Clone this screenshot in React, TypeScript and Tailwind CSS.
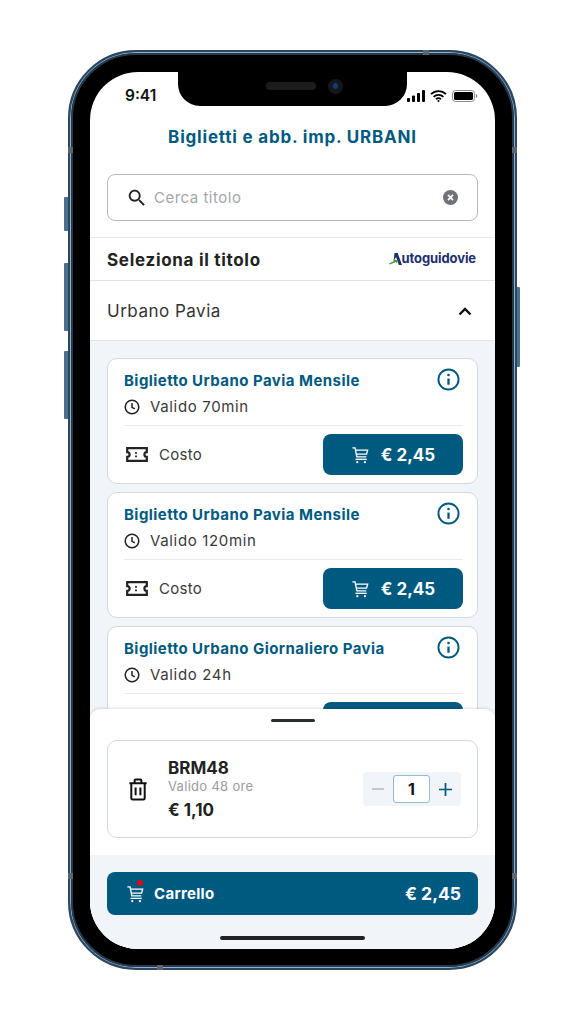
import React from "react";

const tickets = [
  { name: "Biglietto Urbano Pavia Mensile", validity: "Valido 70min" },
  { name: "Biglietto Urbano Pavia Mensile", validity: "Valido 120min" },
  { name: "Biglietto Urbano Giornaliero Pavia", validity: "Valido 24h" },
];

function CartIcon({ className }: { className?: string }) {
  return (
    <svg viewBox="0 0 20 20" fill="none" stroke="currentColor" strokeWidth="1.5" className={className}>
      <path d="M1.5 2h3l2 10h10.500" />
      <path d="M5 4.500h13.500l-1.200 4.500H5.800" />
      <path d="M5 14.800h12.500" />
      <circle cx="7" cy="18" r="1.200" fill="currentColor" stroke="none" />
      <circle cx="15.500" cy="18" r="1.200" fill="currentColor" stroke="none" />
    </svg>
  );
}

function TicketIcon() {
  return (
    <svg viewBox="0 0 22 15" className="h-[15px] w-[22px] text-[#222]" fill="none" stroke="currentColor" strokeWidth="2.2">
      <path d="M1.200 1.200h19.600v3.900a2.400 2.400 0 0 0 0 4.800v3.900H1.200V9.900a2.400 2.400 0 0 0 0-4.800z" />
      <path d="M10 5v1.800M10 8.400v1.800" strokeWidth="1.800" />
    </svg>
  );
}

function ClockIcon() {
  return (
    <svg viewBox="0 0 16 16" className="mb-[1px] h-[16px] w-[16px] text-[#222]" fill="none" stroke="currentColor" strokeWidth="1.500">
      <circle cx="8" cy="8" r="6.800" />
      <path d="M8 4v4.300l2.800 1.600" />
    </svg>
  );
}

function InfoIcon() {
  return (
    <svg viewBox="0 0 24 24" className="h-[23px] w-[23px] text-[#005a80]" fill="none" stroke="currentColor" strokeWidth="2">
      <circle cx="12" cy="12" r="10.500" />
      <path d="M12 11v6.500" strokeWidth="2.400" />
      <circle cx="12" cy="7.300" r="1.400" fill="currentColor" stroke="none" />
    </svg>
  );
}

function StatusIcons() {
  return (
    <div className="flex items-center gap-[5px] text-black">
      <svg viewBox="0 0 18 12" className="h-[12px] w-[18px]" fill="currentColor">
        <rect x="0" y="8" width="3" height="4" rx="1" />
        <rect x="5" y="5.500" width="3" height="6.500" rx="1" />
        <rect x="10" y="3" width="3" height="9" rx="1" />
        <rect x="15" y="0" width="3" height="12" rx="1" />
      </svg>
      <svg viewBox="0 0 17 12" className="h-[12px] w-[17px]" fill="none" stroke="currentColor" strokeWidth="1.900">
        <path d="M1 4.200a10.600 10.600 0 0 1 15 0" />
        <path d="M3.600 6.900a7 7 0 0 1 9.800 0" />
        <path d="M6.100 9.300a3.400 3.400 0 0 1 4.800 0" />
        <circle cx="8.500" cy="11" r="1" fill="currentColor" stroke="none" />
      </svg>
      <svg viewBox="0 0 26 12" className="h-[12px] w-[26px]" fill="none">
        <rect x="0.500" y="0.500" width="22" height="11" rx="3" stroke="#888" />
        <rect x="2" y="2" width="19" height="8" rx="1.600" fill="currentColor" />
        <path d="M24 4v4c.8-.3 1.400-1.100 1.400-2s-.6-1.700-1.400-2z" fill="#888" />
      </svg>
    </div>
  );
}

function Logo() {
  return (
    <div className="flex items-center text-[13px] font-bold tracking-[-0.1px] text-[#1c2f6e]">
      <svg viewBox="0 0 14 12" className="-mr-[1px] h-[12px] w-[14px]">
        <path d="M5.500 0h3.200L13 12H9.800L7 4 4.600 8z" fill="#1c2f6e" />
        <path d="M0 10.500 5 8l-.8-1.300L9 7l-1.500 3.500-.8-1.400L1 11.500z" fill="#4f9a2f" />
      </svg>
      <span>utoguidovie</span>
    </div>
  );
}

function TicketCard({ name, validity }: { name: string; validity: string }) {
  return (
    <div className="h-[126px] shrink-0 rounded-[10px] border border-[#d3d9e0] bg-white pl-[16px] pr-[14px]">
      <div className="flex h-[35px] items-end justify-between pr-[3px]">
        <span className="text-[15px] font-bold leading-[26px] tracking-[0.45px] text-[#005a80]">{name}</span>
        <span className="mb-[3px]">
          <InfoIcon />
        </span>
      </div>
      <div className="mt-[1px] flex h-[24px] items-center gap-[10px] text-[#3a3a3a]">
        <ClockIcon />
        <span className="pt-[1px] text-[15px] tracking-[0.65px]">{validity}</span>
      </div>
      <div className="mt-[6px] border-t border-[#e6e9ed] pt-[8px]">
        <div className="flex items-center justify-between pl-[2px]">
          <div className="flex items-center gap-[11px] text-[15px] tracking-[0.3px] text-[#3a3a3a]">
            <TicketIcon />
            <span className="pt-[2px]">Costo</span>
          </div>
          <button className="flex h-[41px] w-[140px] items-center justify-center gap-[12px] rounded-[8px] bg-[#005a80] text-[17px] font-bold text-white">
            <CartIcon className="h-[18px] w-[18px]" />
            <span className="pt-[2px]">€ 2,45</span>
          </button>
        </div>
      </div>
    </div>
  );
}

export default function App() {
  return (
    <div className="min-h-[1024px] bg-white pl-[68px] pt-[50px] font-['Inter',sans-serif]">
      <div className="relative h-[920px] w-[449px]">
        {/* side buttons */}
        <div className="absolute -left-[4px] top-[147px] h-[34px] w-[4px] rounded-l-[1px] bg-[#4d708c]" />
        <div className="absolute -left-[4px] top-[213px] h-[68px] w-[4px] rounded-l-[1px] bg-[#4d708c]" />
        <div className="absolute -left-[4px] top-[301px] h-[68px] w-[4px] rounded-l-[1px] bg-[#4d708c]" />
        <div className="absolute -right-[3px] top-[237px] h-[80px] w-[3px] rounded-r-[1px] bg-[#4d708c]" />

        {/* frame */}
        <div className="h-full rounded-[68px] border-[2px] border-[#2b4860] bg-[#2b4860]">
          <div className="h-full rounded-[66px] border border-[#8fb2cf]">
            <div className="h-full rounded-[65px] border-[2px] border-[#25394a] bg-black p-[17px] pb-[16px]">
              <div className="relative flex h-full flex-col overflow-hidden rounded-[48px] bg-white">
                {/* notch */}
                <div className="absolute left-[88px] top-0 flex h-[34px] w-[229px] items-center justify-center gap-[12px] rounded-b-[22px] bg-black pb-[6px] pl-[24px]">
                  <div className="h-[8px] w-[50px] rounded-full bg-[#1c1c1e]" />
                  <div className="flex h-[15px] w-[15px] items-center justify-center rounded-full bg-[#14161c]">
                    <div className="h-[6px] w-[5px] rounded-full bg-[#123a73]" />
                  </div>
                </div>

                {/* header */}
                <div className="h-[166px] shrink-0 border-b border-[#e6e8eb] px-[17px]">
                  <div className="flex h-[49px] items-start justify-between pl-[18px] pt-[15px]">
                    <span className="text-[15.500px] font-semibold leading-[18px] text-[#111]">9:41</span>
                    <span className="pt-[3px]">
                      <StatusIcons />
                    </span>
                  </div>
                  <h1 className="mt-[4px] text-center text-[17px] font-bold leading-[24px] tracking-[0.8px] text-[#005a80]">
                    Biglietti e abb. imp. URBANI
                  </h1>
                  <div className="mt-[25px] flex h-[47px] items-center rounded-[8px] border border-[#b5b8bc] pl-[18px] pr-[19px]">
                    <svg viewBox="0 0 24 24" className="h-[22px] w-[22px] text-[#222]" fill="currentColor">
                      <path d="M15.500 14h-.79l-.28-.27C15.410 12.590 16 11.110 16 9.500 16 5.910 13.090 3 9.500 3S3 5.910 3 9.500 5.910 16 9.500 16c1.610 0 3.090-.59 4.230-1.570l.27.28v.79l5 4.990L20.490 19l-4.990-5zm-6 0C7.010 14 5 11.990 5 9.500S7.010 5 9.500 5 14 7.010 14 9.500 11.990 14 9.500 14z" />
                    </svg>
                    <span className="ml-[6px] flex-1 pt-[2px] text-[15px] tracking-[0.5px] text-[#a3a6aa]">Cerca titolo</span>
                    <svg viewBox="0 0 16 16" className="h-[15px] w-[15px]">
                      <circle cx="8" cy="8" r="8" fill="#6f7378" />
                      <path d="M5.300 5.300l5.400 5.400M10.700 5.300l-5.400 5.400" stroke="#fff" strokeWidth="1.800" />
                    </svg>
                  </div>
                </div>

                <div className="flex h-[43px] shrink-0 items-center justify-between border-b border-[#e0e3e6] pl-[17px] pr-[19px]">
                  <span className="pt-[4px] text-[17px] font-bold tracking-[0.7px] text-[#222]">Seleziona il titolo</span>
                  <Logo />
                </div>

                <div className="flex h-[60px] shrink-0 items-center justify-between border-b border-[#e0e3e6] pl-[17px] pr-[23px] pt-[2px]">
                  <span className="text-[17px] tracking-[0.5px] text-[#333]">Urbano Pavia</span>
                  <svg viewBox="0 0 14 9" className="h-[9px] w-[14px] text-[#111]" fill="none" stroke="currentColor" strokeWidth="2.400">
                    <path d="M1.500 7.500 7 2l5.500 5.500" />
                  </svg>
                </div>

                {/* ticket list */}
                <div className="flex min-h-0 flex-1 flex-col gap-[8px] overflow-hidden bg-[#f1f4f8] px-[17px] pt-[17px]">
                  {tickets.map((t) => (
                    <TicketCard key={t.validity} name={t.name} validity={t.validity} />
                  ))}
                </div>

                {/* bottom sheet */}
                <div className="relative -mt-[8px] flex h-[240px] shrink-0 flex-col rounded-t-[10px] bg-white pt-[10px] shadow-[0_-1px_3px_rgba(0,0,0,0.12)]">
                  <div className="mx-auto h-[3px] w-[44px] rounded-full bg-[#2a2d30]" />
                  <div className="mx-[17px] mt-[18px] flex h-[98px] items-center rounded-[10px] border border-[#d3d9e0] pl-[20px] pr-[16px]">
                    <svg viewBox="0 0 20 24" className="h-[23px] w-[20px] text-[#111]" fill="none" stroke="currentColor" strokeWidth="2.100">
                      <path d="M1 5.500h18M6.500 5V2.500a1 1 0 0 1 1-1h5a1 1 0 0 1 1 1V5" />
                      <path d="M3 5.500v15.500a1.500 1.500 0 0 0 1.500 1.500h11a1.500 1.500 0 0 0 1.500-1.500V5.500" />
                      <path d="M7.500 10v8M12.500 10v8" />
                    </svg>
                    <div className="ml-[20px] flex-1">
                      <div className="text-[17px] font-bold leading-[20px] text-[#222]">BRM48</div>
                      <div className="text-[13px] leading-[17px] tracking-[0.3px] text-[#9a9da1]">Valido 48 ore</div>
                      <div className="mt-[4px] text-[17px] font-bold leading-[22px] text-[#222]">€ 1,10</div>
                    </div>
                    <div className="flex h-[34px] w-[98px] items-center justify-between rounded-[4px] bg-[#f1f4f8] px-[9px]">
                      <svg viewBox="0 0 12 12" className="h-[12px] w-[12px]" stroke="#b4bac0" strokeWidth="1.600">
                        <path d="M0 6h12" />
                      </svg>
                      <div className="flex h-[28px] w-[37px] items-center justify-center rounded-[3px] border border-[#93bcd0] bg-white text-[16px] font-bold text-[#111]">
                        1
                      </div>
                      <svg viewBox="0 0 12 12" className="h-[13px] w-[13px]" stroke="#005a80" strokeWidth="1.600">
                        <path d="M0 6h12M6 0v12" />
                      </svg>
                    </div>
                  </div>
                  <div className="mt-[17px] flex-1 bg-[#f1f4f8] px-[17px] pt-[17px]">
                    <div className="flex h-[43px] items-center justify-between rounded-[8px] bg-[#005a80] pl-[19px] pr-[17px] font-bold text-white">
                      <div className="relative flex items-center gap-[10px] text-[15px] tracking-[0.3px]">
                        <CartIcon className="h-[18px] w-[18px]" />
                        <span className="absolute -top-[1px] left-[11px] h-[6px] w-[6px] rounded-full bg-[#e30613]" />
                        <span className="pt-[2px]">Carrello</span>
                      </div>
                      <span className="pt-[2px] text-[17.500px]">€ 2,45</span>
                    </div>
                    <div className="mx-auto mt-[21px] h-[4px] w-[145px] rounded-full bg-[#222]" />
                  </div>
                </div>
              </div>
            </div>
          </div>
        </div>

        {/* antenna bands */}
        <div className="absolute left-0 top-[97px] h-[6px] w-[5px] bg-[#5c6670]" />
        <div className="absolute right-0 top-[97px] h-[6px] w-[5px] bg-[#5c6670]" />
        <div className="absolute bottom-[91px] left-0 h-[6px] w-[5px] bg-[#5c6670]" />
        <div className="absolute bottom-[91px] right-0 h-[6px] w-[5px] bg-[#5c6670]" />
        <div className="absolute left-[355px] top-0 h-[5px] w-[6px] bg-[#5c6670]" />
        <div className="absolute bottom-0 left-[89px] h-[5px] w-[6px] bg-[#5c6670]" />
      </div>
    </div>
  );
}
